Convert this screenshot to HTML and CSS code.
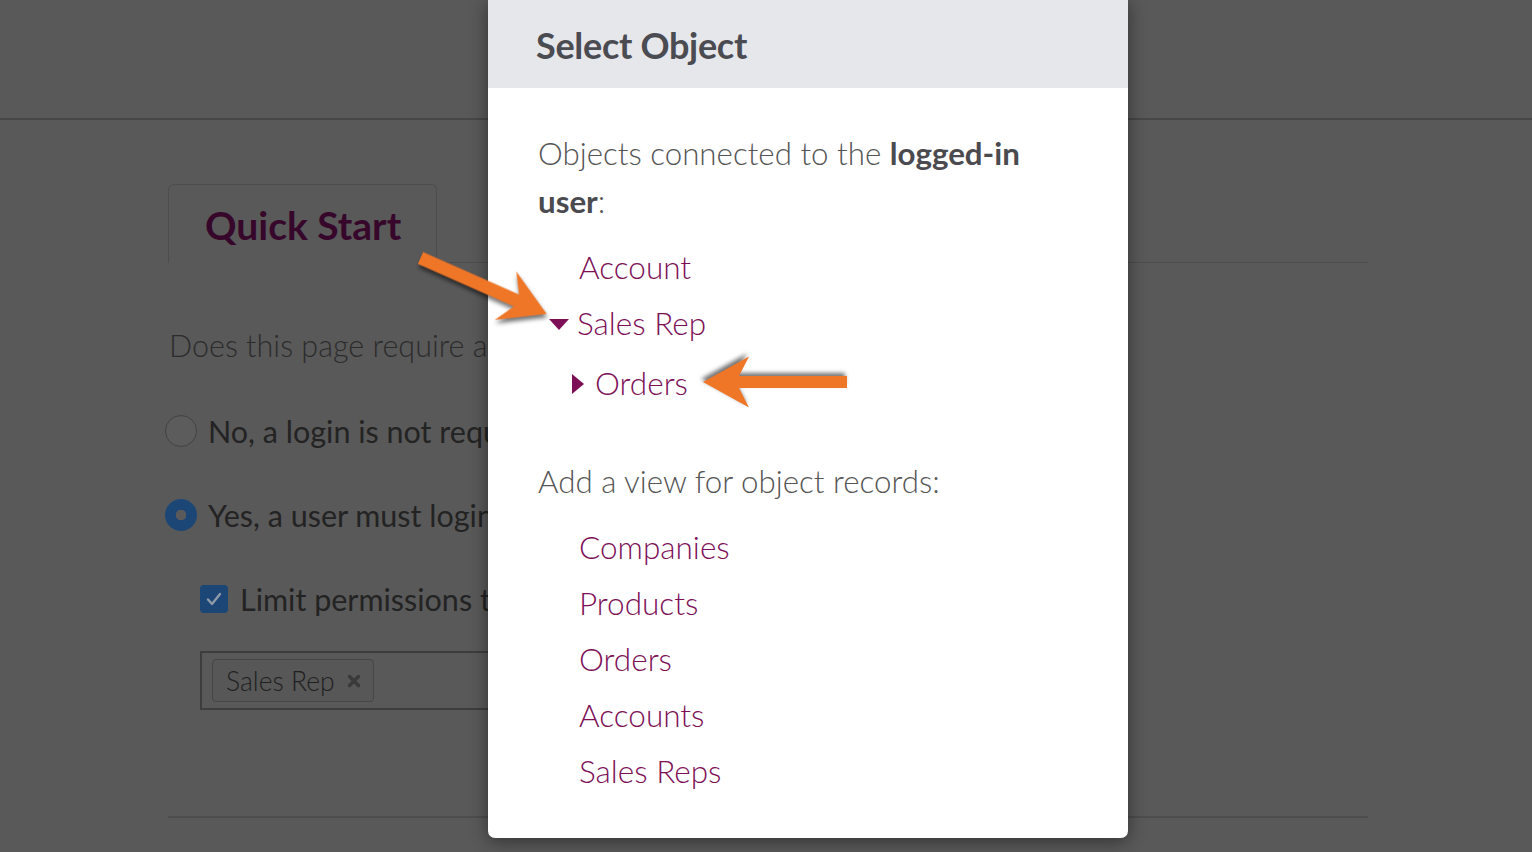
FILE: index.html
```html
<!DOCTYPE html>
<html lang="en">
<head>
<meta charset="utf-8">
<title>Select Object</title>
<link rel="stylesheet" href="styles.css">
</head>
<body>
<div class="page">
  <header class="topbar"></header>
  <main class="content">
    <div class="tabs">
      <div class="tab active">Quick Start</div>
      <div class="tab-fill"></div>
    </div>
    <p class="question">Does this page require a user to log in?</p>
    <div class="option first">
      <span class="radio"></span>
      <span class="opt-label">No, a login is not required</span>
    </div>
    <div class="option">
      <span class="radio checked"></span>
      <span class="opt-label">Yes, a user must login to access</span>
    </div>
    <div class="option sub">
      <span class="checkbox"><svg viewBox="0 0 28 28" width="28" height="28"><path d="M8 14.5l4 4.5 8-10" fill="none" stroke="#8e9aa8" stroke-width="2.4" stroke-linecap="round" stroke-linejoin="round"/></svg></span>
      <span class="opt-label">Limit permissions to users</span>
    </div>
    <div class="tag-input">
      <span class="tag">Sales Rep <svg class="tag-x" viewBox="0 0 14 14" width="14" height="14"><path d="M2.5 2.5l9 9M11.5 2.5l-9 9" stroke="#3a3a3a" stroke-width="3.4" stroke-linecap="round"/></svg></span>
    </div>
    <div class="bottom-line"></div>
  </main>
</div>

<div class="modal">
  <div class="modal-head">Select Object</div>
  <div class="modal-body">
    <p class="intro">Objects connected to the <b>logged-in user</b>:</p>
    <ul class="tree">
      <li class="leaf"><a>Account</a></li>
      <li class="expanded">
        <div class="node"><span class="tri-down"></span><a>Sales Rep</a></div>
        <ul class="subtree">
          <li class="node collapsed"><span class="tri-right"></span><a>Orders</a></li>
        </ul>
      </li>
    </ul>
    <p class="intro second">Add a view for object records:</p>
    <ul class="tree records">
      <li class="leaf"><a>Companies</a></li>
      <li class="leaf"><a>Products</a></li>
      <li class="leaf"><a>Orders</a></li>
      <li class="leaf"><a>Accounts</a></li>
      <li class="leaf"><a>Sales Reps</a></li>
    </ul>
  </div>
</div>

<svg class="arrows" viewBox="0 0 1532 852" width="1532" height="852">
  <polygon class="arrow" transform="translate(420.5 258) rotate(23.9)" points="0,-6.5 105,-6.5 93,-26.5 138,0 93,26.5 105,6.5 0,6.5"/>
  <polygon class="arrow" transform="translate(847 382) rotate(180)" points="0,-6 108,-6 98,-25.5 144,0 98,25.5 108,6 0,6"/>
</svg>
</body>
</html>
```

FILE: styles.css
```css
* { box-sizing: border-box; }

html, body {
  margin: 0;
  padding: 0;
}

body {
  width: 1532px;
  height: 852px;
  overflow: hidden;
  background: #595959;
  font-family: Lato, "Open Sans", "Liberation Sans", sans-serif;
  position: relative;
}

.page {
  width: 1532px;
}

.topbar {
  height: 120px;
  border-bottom: 2px solid #474747;
}

.content {
  margin-left: 168px;
  width: 1200px;
  padding-top: 64px;
}

.tabs {
  display: flex;
  height: 79px;
}

.tab {
  width: 269px;
  height: 79px;
  border: 1px solid #4d4d4d;
  border-bottom: none;
  border-radius: 6px 6px 0 0;
  display: flex;
  align-items: center;
  padding-left: 36px;
  padding-top: 2px;
  font-size: 39px;
  font-weight: 700;
  color: #36072a;
  white-space: nowrap;
}

.tab-fill {
  flex: 1;
  border-bottom: 1px solid #4d4d4d;
}

.question {
  margin: 62px 0 0 1px;
  width: 319px;
  overflow: hidden;
  height: 40px;
  line-height: 40px;
  font-size: 30.5px;
  font-weight: 300;
  color: #2c2c2c;
  white-space: nowrap;
}

.option {
  display: flex;
  align-items: center;
  height: 40px;
  margin-top: 44px;
  margin-left: -3px;
  gap: 11px;
}

.option.first { margin-top: 46px; }

.option.sub {
  margin-left: 32px;
  gap: 12px;
}

.opt-label {
  font-size: 30.5px;
  font-weight: 400;
  color: #232323;
  white-space: nowrap;
  overflow: hidden;
  width: 280px;
}

.option.sub .opt-label { width: 248px; }

.radio {
  width: 32px;
  height: 32px;
  border-radius: 50%;
  border: 1.5px solid #434343;
  background: #5c5c5c;
  flex: none;
}

.radio.checked {
  border: none;
  background: radial-gradient(circle, #5a5a5a 0 5px, #1b4676 5.5px);
}

.checkbox {
  width: 28px;
  height: 28px;
  border-radius: 4px;
  background: #1b4676;
  flex: none;
  display: flex;
}

.tag-input {
  margin: 32px 0 0 32px;
  width: 288px;
  height: 59px;
  border: 2px solid #3d3d3d;
  border-right: none;
  padding: 6px 10px;
}

.tag {
  display: inline-flex;
  align-items: center;
  gap: 12px;
  height: 43px;
  padding: 0 12px 0 13px;
  border: 1.5px solid #454545;
  border-radius: 4px;
  background: #575757;
  font-size: 26.5px;
  font-weight: 300;
  color: #202020;
  white-space: nowrap;
}

.tag-x { margin-top: 1px; }

.bottom-line {
  margin-top: 106px;
  border-bottom: 2px solid #4d4d4d;
}

/* Modal */
.modal {
  position: absolute;
  left: 488px;
  top: 0;
  width: 640px;
  height: 838px;
  background: #fff;
  border-radius: 0 0 7px 7px;
  box-shadow: 0 3px 18px rgba(0, 0, 0, 0.45);
  overflow: hidden;
}

.modal-head {
  height: 88px;
  background: #e6e7eb;
  display: flex;
  align-items: center;
  padding-left: 48px;
  padding-top: 2px;
  font-size: 36px;
  font-weight: 700;
  color: #4b4b52;
  letter-spacing: -0.3px;
}

.modal-body {
  padding: 0 50px;
}

.intro {
  margin: 41px 0 0;
  font-size: 31.3px;
  line-height: 48px;
  font-weight: 300;
  color: #555;
}

.intro b {
  font-weight: 700;
  color: #4a4a4f;
}

.intro.second { margin-top: 46px; }

.tree {
  list-style: none;
  margin: 14px 0 0;
  padding-left: 41px;
  font-size: 31.5px;
  font-weight: 300;
  line-height: 56px;
}

.tree a { color: #7d0f57; }

.leaf {
  height: 56px;
}

.expanded { margin-left: -30px; }

.node {
  display: flex;
  align-items: center;
  height: 56px;
}

.tri-down {
  width: 0;
  height: 0;
  border-left: 10px solid transparent;
  border-right: 10px solid transparent;
  border-top: 11px solid #7d0f57;
  margin-right: 8px;
  margin-top: 2px;
}

.subtree {
  list-style: none;
  margin: 4px 0 0;
  padding-left: 23px;
}

.tri-right {
  width: 0;
  height: 0;
  border-top: 10px solid transparent;
  border-bottom: 10px solid transparent;
  border-left: 12px solid #7d0f57;
  margin-right: 11px;
  margin-top: 2px;
}

.records { margin-top: 14px; }

/* Annotation arrows */
.arrows {
  position: absolute;
  left: 0;
  top: 0;
  pointer-events: none;
}

.arrow {
  fill: #f07627;
  filter: drop-shadow(2px 3px 2px rgba(0, 0, 0, 0.55));
}
```
